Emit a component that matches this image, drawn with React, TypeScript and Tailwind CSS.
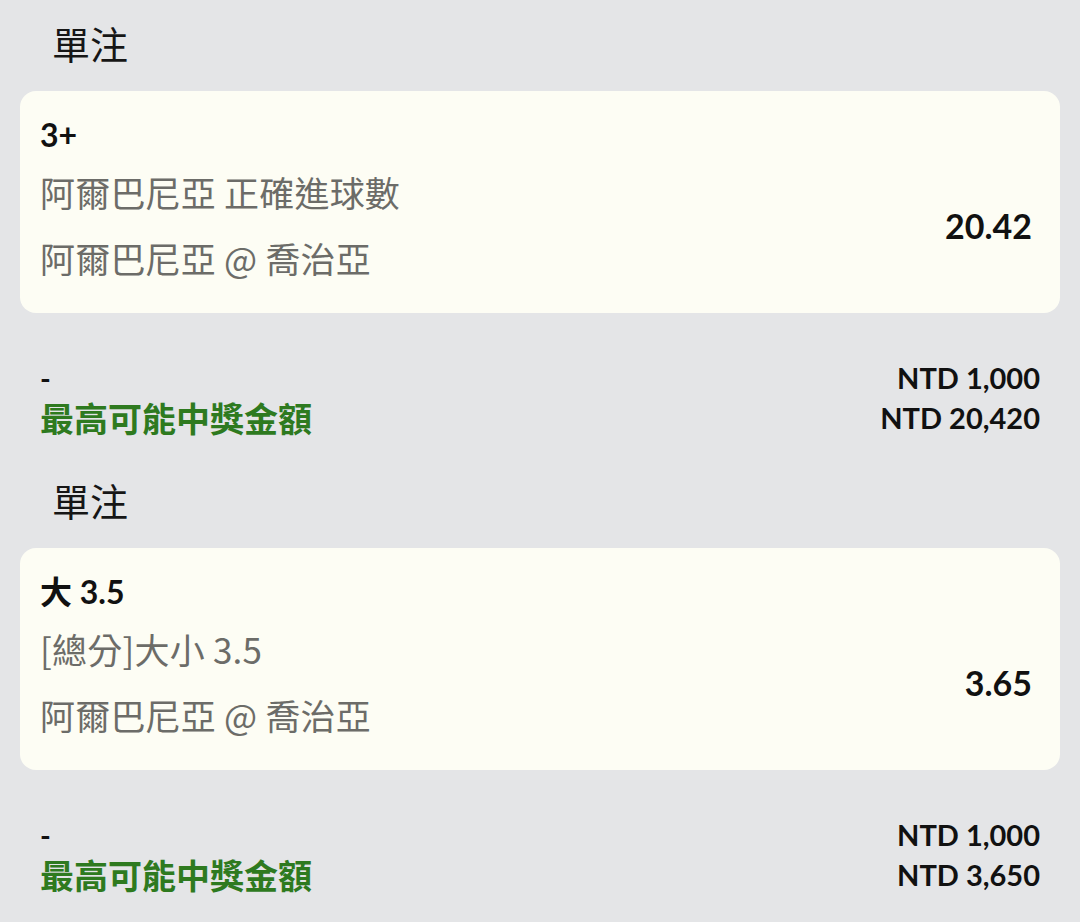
const font = { fontFamily: 'Lato, "Noto Sans CJK TC", sans-serif' };
const cjk = { fontFamily: '"Noto Sans CJK TC", sans-serif' };

type Bet = {
  pick: string;
  market: string;
  match: string;
  odds: string;
  stake: string;
  payout: string;
};

const bets: Bet[] = [
  {
    pick: '3+',
    market: '阿爾巴尼亞 正確進球數',
    match: '阿爾巴尼亞 @ 喬治亞',
    odds: '20.42',
    stake: 'NTD 1,000',
    payout: 'NTD 20,420',
  },
  {
    pick: '大 3.5',
    market: '[總分]大小 3.5',
    match: '阿爾巴尼亞 @ 喬治亞',
    odds: '3.65',
    stake: 'NTD 1,000',
    payout: 'NTD 3,650',
  },
];

function BetSlip({ bet }: { bet: Bet }) {
  return (
    <section>
      <div className="flex h-[91px] items-center pb-[3px] pl-8">
        <h2 className="text-[38px] font-normal text-[#161616]">單注</h2>
      </div>

      <div className="rounded-2xl bg-[#fdfdf4] px-5 pb-[30px] pt-[22px]">
        <div className="text-[32px] font-bold leading-[44px] text-[#111]">{bet.pick}</div>
        <div className="mt-[10px] flex items-center justify-between">
          <div className="text-[35px] font-normal tracking-[0.2px] text-[#6c6c68]" style={cjk}>
            <div className="leading-[50px]">{bet.market}</div>
            <div className="mt-[16px] leading-[50px]">{bet.match}</div>
          </div>
          <div className="pr-[8px] text-[34px] font-bold text-[#111]">{bet.odds}</div>
        </div>
      </div>

      <div className="px-5 pb-[19px] pt-[45px]">
        <div className="flex h-[40px] items-center justify-between">
          <span className="text-[29px] font-bold text-[#111]">-</span>
          <span className="text-[29px] font-bold text-[#111]">{bet.stake}</span>
        </div>
        <div className="flex h-[40px] items-center justify-between">
          <span className="text-[34px] font-bold text-[#2e7a1f]">最高可能中獎金額</span>
          <span className="text-[29px] font-bold text-[#111]">{bet.payout}</span>
        </div>
      </div>
    </section>
  );
}

export default function App() {
  return (
    <div className="min-h-[922px] w-[1080px] bg-[#e4e5e7] px-5" style={font}>
      {bets.map((b) => (
        <BetSlip key={b.odds} bet={b} />
      ))}
    </div>
  );
}
